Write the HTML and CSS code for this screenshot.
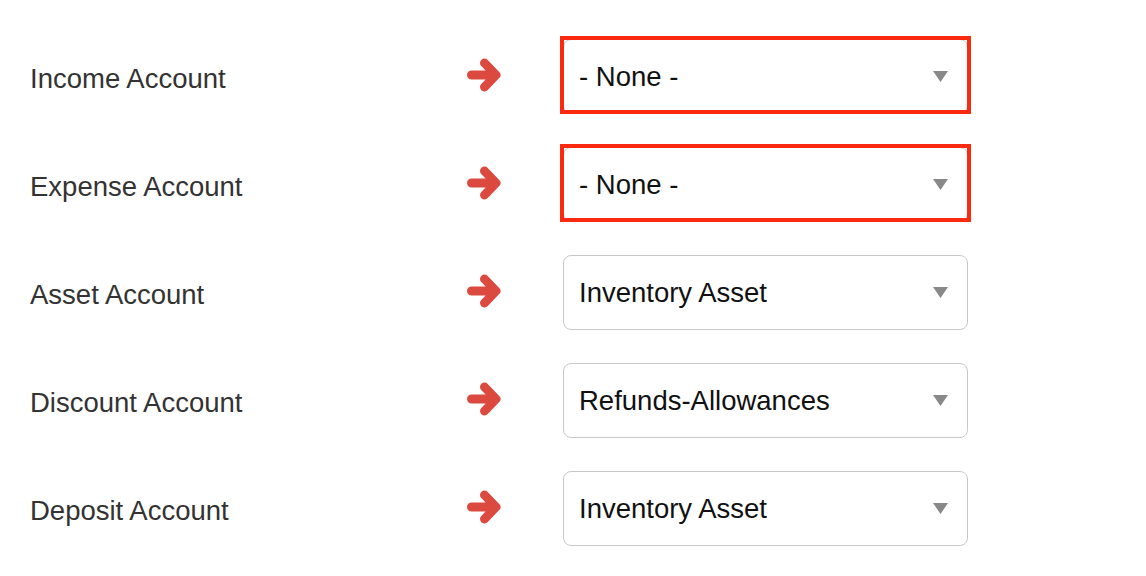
FILE: index.html
```html
<!DOCTYPE html>
<html>
<head>
<meta charset="utf-8">
<link rel="stylesheet" href="styles.css">
</head>
<body>
<div class="form">
  <div class="row">
    <div class="label">Income Account</div>
    <div class="pointer"><svg width="34" height="34" viewBox="0 0 34 34"><path d="M4.5 17 H27 M17.5 5 L29 17 L17.5 29" fill="none" stroke="#dc4a3f" stroke-width="9" stroke-linecap="round" stroke-linejoin="round"/></svg></div>
    <div class="field highlighted">
      <div class="select"><span>- None -</span><svg class="caret" width="15" height="11" viewBox="0 0 15 11"><path d="M0 0 H15 L7.5 11 Z" fill="#888"/></svg></div>
      <div class="mark"></div>
    </div>
  </div>
  <div class="row">
    <div class="label">Expense Account</div>
    <div class="pointer"><svg width="34" height="34" viewBox="0 0 34 34"><path d="M4.5 17 H27 M17.5 5 L29 17 L17.5 29" fill="none" stroke="#dc4a3f" stroke-width="9" stroke-linecap="round" stroke-linejoin="round"/></svg></div>
    <div class="field highlighted">
      <div class="select"><span>- None -</span><svg class="caret" width="15" height="11" viewBox="0 0 15 11"><path d="M0 0 H15 L7.5 11 Z" fill="#888"/></svg></div>
      <div class="mark"></div>
    </div>
  </div>
  <div class="row">
    <div class="label">Asset Account</div>
    <div class="pointer"><svg width="34" height="34" viewBox="0 0 34 34"><path d="M4.5 17 H27 M17.5 5 L29 17 L17.5 29" fill="none" stroke="#dc4a3f" stroke-width="9" stroke-linecap="round" stroke-linejoin="round"/></svg></div>
    <div class="field">
      <div class="select"><span>Inventory Asset</span><svg class="caret" width="15" height="11" viewBox="0 0 15 11"><path d="M0 0 H15 L7.5 11 Z" fill="#888"/></svg></div>
    </div>
  </div>
  <div class="row">
    <div class="label">Discount Account</div>
    <div class="pointer"><svg width="34" height="34" viewBox="0 0 34 34"><path d="M4.5 17 H27 M17.5 5 L29 17 L17.5 29" fill="none" stroke="#dc4a3f" stroke-width="9" stroke-linecap="round" stroke-linejoin="round"/></svg></div>
    <div class="field">
      <div class="select"><span>Refunds-Allowances</span><svg class="caret" width="15" height="11" viewBox="0 0 15 11"><path d="M0 0 H15 L7.5 11 Z" fill="#888"/></svg></div>
    </div>
  </div>
  <div class="row">
    <div class="label">Deposit Account</div>
    <div class="pointer"><svg width="34" height="34" viewBox="0 0 34 34"><path d="M4.5 17 H27 M17.5 5 L29 17 L17.5 29" fill="none" stroke="#dc4a3f" stroke-width="9" stroke-linecap="round" stroke-linejoin="round"/></svg></div>
    <div class="field">
      <div class="select"><span>Inventory Asset</span><svg class="caret" width="15" height="11" viewBox="0 0 15 11"><path d="M0 0 H15 L7.5 11 Z" fill="#888"/></svg></div>
    </div>
  </div>
</div>
</body>
</html>
```
FILE: styles.css
```css
html, body {
  margin: 0;
  padding: 0;
  background: #ffffff;
}
body {
  font-family: "Liberation Sans", Arial, Helvetica, sans-serif;
  font-size: 27.5px;
}
.form {
  display: flex;
  flex-direction: column;
  gap: 33px;
  padding: 39px 0 0 30px;
}
.row {
  display: grid;
  grid-template-columns: 437px 96px 405px;
  align-items: center;
  height: 75px;
}
.label {
  color: #333333;
  padding-top: 5px;
}
.pointer {
  display: flex;
  align-items: center;
  height: 75px;
  padding-bottom: 4px;
  box-sizing: border-box;
}
.pointer svg {
  display: block;
}
.field {
  position: relative;
  height: 75px;
}
.select {
  box-sizing: border-box;
  height: 75px;
  width: 405px;
  border: 1px solid #c8c8c8;
  border-radius: 8px;
  background: #ffffff;
  display: flex;
  align-items: center;
  justify-content: space-between;
  padding: 0 19px 0 15px;
  color: #111111;
}
.select span {
  padding-top: 1px;
}
.caret {
  display: block;
}
.mark {
  position: absolute;
  left: -3px;
  top: -3px;
  width: 411px;
  height: 78px;
  box-sizing: border-box;
  border: 4px solid #fa2a10;
}
```
